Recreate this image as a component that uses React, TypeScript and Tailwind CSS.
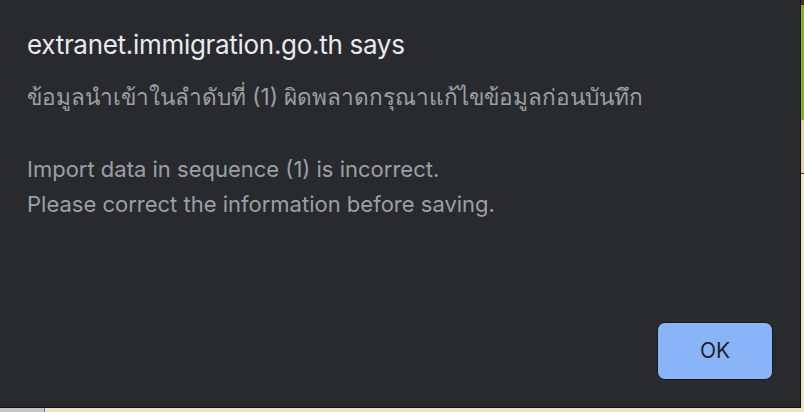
export default function App() {
  return (
    <div className="w-[804px] h-[412px] relative overflow-hidden bg-[#e9e2c4] flex flex-col">
      <div className="flex flex-1">
        <div className="w-[801px] h-[408px] bg-[#292a2d] border-r border-b border-[#111214] flex flex-col pl-[27px] pr-[30px] pt-[29px] pb-[27px]" style={{ fontFamily: 'Inter, "Noto Sans", sans-serif' }}>
          <div className="text-[26px] leading-[32px] text-[#e8eaed] tracking-[-0.3px]">extranet.immigration.go.th says</div>
          <div className="mt-[21px] text-[22.6px] leading-[30px] text-[#9aa0a6]">ข้อมูลนำเข้าในลำดับที่ (1) ผิดพลาดกรุณาแก้ไขข้อมูลก่อนบันทึก</div>
          <div className="mt-[40px] text-[22px] leading-[35px] text-[#9aa0a6]">
            <div>Import data in sequence (1) is incorrect.</div>
            <div>Please correct the information before saving.</div>
          </div>
          <div className="flex-1" />
          <div className="flex justify-end">
            <button className="w-[116px] h-[58px] rounded-[8px] bg-[#8ab4f8] border border-[#1a1b1e] text-[#202124] text-[21px] mr-[-3px]">OK</button>
          </div>
        </div>
        <div className="flex-1 flex flex-col">
          <div className="h-[5px] bg-[#3a3a2a]" />
          <div className="h-[115px] bg-[#8db012]" />
          <div className="h-[53px] bg-[#ddd3ad]" />
          <div className="h-[1px] bg-[#6b1d1d]" />
          <div className="flex-1 bg-[#ece6c9]" />
        </div>
      </div>
      <div className="h-[4px] flex">
        <div className="w-[44px] bg-[#c6c6c4]" />
        <div className="w-[1px] bg-[#5b7fb8]" />
        <div className="flex-1 bg-[#ece6c9]" />
      </div>
    </div>
  );
}
